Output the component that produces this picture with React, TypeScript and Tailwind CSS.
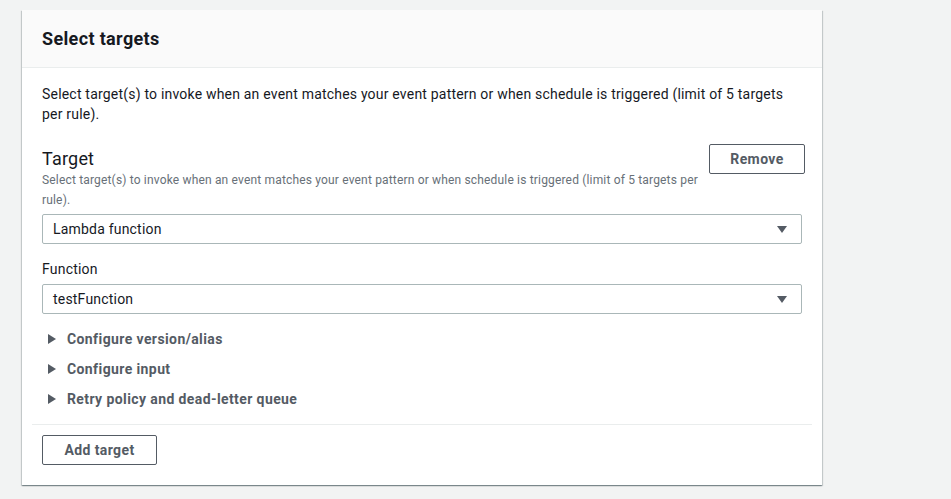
import React from "react";

const Caret = () => (
  <svg width="10" height="7" viewBox="0 0 10 7" className="shrink-0">
    <path d="M0 0 L10 0 L5 7 Z" fill="#545b64" />
  </svg>
);

const Arrow = () => (
  <svg width="8" height="10" viewBox="0 0 8 10" className="shrink-0">
    <path d="M0 0 L8 5 L0 10 Z" fill="#545b64" />
  </svg>
);

const Select = ({ value }: { value: string }) => (
  <div className="flex h-[30px] items-center justify-between rounded-[2px] border border-[#aab7b8] bg-white pl-[10px] pr-[14px] text-[14px] tracking-[0.2px] text-[#16191f]">
    <span>{value}</span>
    <Caret />
  </div>
);

const Expander = ({ label }: { label: string }) => (
  <div className="flex h-[30px] items-center gap-[11px] pl-[6px] text-[14px] font-bold tracking-[0.4px] text-[#545b64]">
    <Arrow />
    <span>{label}</span>
  </div>
);

const App = () => {
  return (
    <div className="min-h-[499px] w-full bg-[#f2f3f3] pl-[22px] pt-[10px] font-['Roboto',sans-serif]">
      <div className="w-[800px] bg-white shadow-[0_1px_1px_0_rgba(0,28,36,0.3),1px_1px_1px_0_rgba(0,28,36,0.15),-1px_1px_1px_0_rgba(0,28,36,0.15)]">
        <div className="flex h-[58px] items-center border-b border-[#eaeded] bg-[#fafafa] px-5">
          <h2 className="text-[18px] font-bold leading-[22px] tracking-[0.35px] text-[#16191f]">
            Select targets
          </h2>
        </div>

        <div className="px-5 pb-5 pt-4">
          <p className="text-[14px] leading-[20px] tracking-[0.2px] text-[#16191f]">
            Select target(s) to invoke when an event matches your event pattern
            or when schedule is triggered (limit of 5 targets per rule).
          </p>

          <div className="-mr-[3px] mt-[20px] flex items-start">
            <div className="flex-1 pt-[4px]">
              <div className="text-[18px] leading-[22px] tracking-[0.2px] text-[#16191f]">
                Target
              </div>
              <div className="text-[12px] leading-[20px] tracking-[0.17px] text-[#687078]">
                Select target(s) to invoke when an event matches your event
                pattern or when schedule is triggered (limit of 5 targets per
                rule).
              </div>
            </div>
            <button className="h-[30px] w-[96px] rounded-[2px] border border-[#545b64] bg-white text-[14px] font-bold tracking-[0.4px] text-[#545b64]">
              Remove
            </button>
          </div>

          <div className="mt-[4px]">
            <Select value="Lambda function" />
          </div>

          <div className="mt-[15px] text-[14px] leading-[20px] tracking-[0.2px] text-[#16191f]">
            Function
          </div>
          <div className="mt-[5px]">
            <Select value="testFunction" />
          </div>

          <div className="mt-[10px]">
            <Expander label="Configure version/alias" />
            <Expander label="Configure input" />
            <Expander label="Retry policy and dead-letter queue" />
          </div>

          <div className="-mx-[10px] mt-[10px] border-t border-[#eaeded]" />

          <button className="mt-[10px] h-[30px] w-[115px] rounded-[2px] border border-[#545b64] bg-white text-[14px] font-bold tracking-[0.4px] text-[#545b64]">
            Add target
          </button>
        </div>
      </div>
    </div>
  );
};

export default App;
